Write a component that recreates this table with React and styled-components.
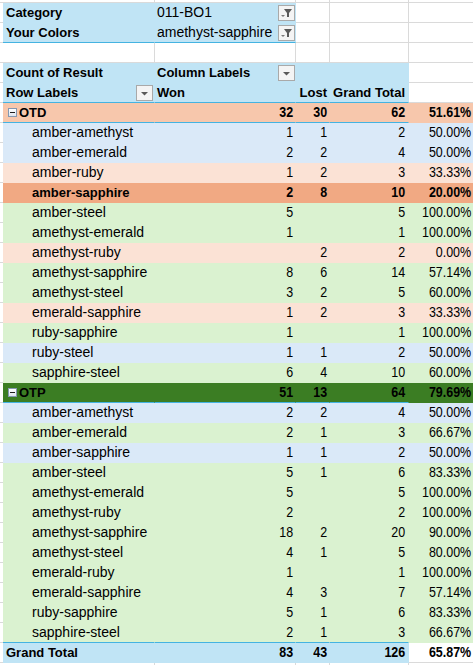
import React from "react";
import styled, { createGlobalStyle } from "styled-components";

const GRID = "#dadada";
const LINE = "#44B3E1";
const TEXT_FONT = `"Liberation Sans", Arial, sans-serif`;

const fills = {
  head: "#C0E4F5",
  blue: "#DAE9F8",
  peach: "#FBE2D5",
  peachMid: "#F7C7AC",
  peachStrong: "#F1A983",
  green: "#DAF2D0",
  greenDark: "#3B7D23",
};

const groups = [
  {
    name: "OTD",
    fill: fills.peachMid,
    items: [
      ["amber-amethyst", 1, 1],
      ["amber-emerald", 2, 2],
      ["amber-ruby", 1, 2],
      ["amber-sapphire", 2, 8, true],
      ["amber-steel", 5, 0],
      ["amethyst-emerald", 1, 0],
      ["amethyst-ruby", 0, 2],
      ["amethyst-sapphire", 8, 6],
      ["amethyst-steel", 3, 2],
      ["emerald-sapphire", 1, 2],
      ["ruby-sapphire", 1, 0],
      ["ruby-steel", 1, 1],
      ["sapphire-steel", 6, 4],
    ],
  },
  {
    name: "OTP",
    fill: fills.greenDark,
    items: [
      ["amber-amethyst", 2, 2],
      ["amber-emerald", 2, 1],
      ["amber-sapphire", 1, 1],
      ["amber-steel", 5, 1],
      ["amethyst-emerald", 5, 0],
      ["amethyst-ruby", 2, 0],
      ["amethyst-sapphire", 18, 2],
      ["amethyst-steel", 4, 1],
      ["emerald-ruby", 1, 0],
      ["emerald-sapphire", 4, 3],
      ["ruby-sapphire", 5, 1],
      ["sapphire-steel", 2, 1],
    ],
  },
];

const GlobalStyle = createGlobalStyle`
  html, body {
    margin: 0;
    background: #fff;
    overflow: hidden;
  }
`;

const Sheet = styled.div`
  display: grid;
  grid-template-columns: 3px 152px 141px 34px 79px 66px;
  grid-template-rows: 3px;
  grid-auto-rows: 20px;
  width: 475px;
  color: #000;
  font-family: ${TEXT_FONT};
`;

const Cell = styled.div`
  box-sizing: border-box;
  display: flex;
  align-items: center;
  justify-content: ${({ $right }) => ($right ? "flex-end" : "flex-start")};
  gap: 2px;
  padding: 0 ${({ $padRight }) => $padRight ?? 2}px 0 ${({ $padLeft }) => $padLeft ?? 2}px;
  background: ${({ $fill }) => $fill || "#fff"};
  border-right: 1px solid ${({ $fill }) => ($fill ? "transparent" : GRID)};
  border-bottom: 1px solid
    ${({ $line, $fill }) => ($line ? LINE : $fill ? "transparent" : GRID)};
  font-size: ${({ $bold }) => ($bold ? 13 : 14)}px;
  font-weight: ${({ $bold }) => ($bold ? 700 : 400)};
  line-height: 19px;
  white-space: nowrap;
  overflow: hidden;
`;

/* numbers in the sheet use a narrow face; squeeze the regular one */
const Num = styled.span`
  display: inline-block;
  font-size: 14.5px;
  transform: scaleX(0.86);
  transform-origin: right center;
`;

const Label = styled.span`
  flex: 1;
  overflow: hidden;
`;

const SmallButton = styled.span`
  box-sizing: border-box;
  flex: none;
  align-self: flex-end;
  width: 17px;
  height: 16px;
  margin-bottom: 1px;
  border: 1px solid #a9a9a9;
  background: #f4f4f4;
  display: flex;
  align-items: center;
  justify-content: center;
`;

const Toggle = styled.span`
  box-sizing: border-box;
  flex: none;
  width: 9px;
  height: 9px;
  margin-left: 5px;
  border: 1px solid #8497b0;
  background: linear-gradient(#ffffff, #dde5ef);
  display: flex;
  align-items: center;
  justify-content: center;

  &::before {
    content: "";
    width: 5px;
    height: 1px;
    background: #1f1f1f;
  }
`;

const FilterButton = () => (
  <SmallButton>
    <svg width="15" height="14" viewBox="0 0 15 14">
      <polygon points="5,3 13,3 10,7 10,11 8,11 8,7" fill="#5a5a5a" />
      <polygon points="2,9 6,9 4,11" fill="#7a7a7a" />
    </svg>
  </SmallButton>
);

const DropButton = () => (
  <SmallButton>
    <svg width="15" height="14" viewBox="0 0 15 14">
      <polygon points="4,6 11,6 7.5,9.5" fill="#5a5a5a" />
    </svg>
  </SmallButton>
);

const Blank = ({ fill }) => <Cell $fill={fill} />;

const pct = (won, total) => `${((won / total) * 100).toFixed(2)}%`;

const rateFill = (won, total) => {
  const r = won / total;
  if (r > 0.5) return fills.green;
  if (r === 0.5) return fills.blue;
  return fills.peach;
};

const DataRow = ({ label, won, lost, fill, bold, toggle, indent, line, pctFill }) => {
  const total = won + lost;
  return (
    <>
      <Blank />
      <Cell $fill={fill} $bold={bold} $line={line} $padLeft={toggle ? 0 : indent ? 29 : 3}>
        {toggle && <Toggle />}
        {label}
      </Cell>
      <Cell $fill={fill} $bold={bold} $line={line} $right>
        <Num>{won || ""}</Num>
      </Cell>
      <Cell $fill={fill} $bold={bold} $line={line} $right>
        <Num>{lost || ""}</Num>
      </Cell>
      <Cell $fill={fill} $bold={bold} $line={line} $right $padRight={3}>
        <Num>{total}</Num>
      </Cell>
      <Cell $fill={pctFill === undefined ? fill : pctFill} $bold={bold} $right $padRight={3}>
        <Num>{pct(won, total)}</Num>
      </Cell>
    </>
  );
};

const EmptyRow = () => (
  <>
    {Array.from({ length: 6 }).map((_, i) => (
      <Blank key={i} />
    ))}
  </>
);

export default function App() {
  const totalWon = groups.reduce((s, g) => s + g.items.reduce((a, it) => a + it[1], 0), 0);
  const totalLost = groups.reduce((s, g) => s + g.items.reduce((a, it) => a + it[2], 0), 0);

  return (
    <>
      <GlobalStyle />
      <Sheet>
        <EmptyRow />

        <Blank />
        <Cell $fill={fills.head} $bold $padLeft={3}>Category</Cell>
        <Cell $fill={fills.head} $padRight={0}>
          <Label>011-BO1</Label>
          <FilterButton />
        </Cell>
        <Blank />
        <Blank />
        <Blank />

        <Blank />
        <Cell $fill={fills.head} $bold $line $padLeft={3}>Your Colors</Cell>
        <Cell $fill={fills.head} $line $padRight={0}>
          <Label>amethyst-sapphire</Label>
          <FilterButton />
        </Cell>
        <Blank />
        <Blank />
        <Blank />

        <EmptyRow />

        <Blank />
        <Cell $fill={fills.head} $bold $padLeft={3}>Count of Result</Cell>
        <Cell $fill={fills.head} $bold $padRight={0}>
          <Label>Column Labels</Label>
          <DropButton />
        </Cell>
        <Blank fill={fills.head} />
        <Blank fill={fills.head} />
        <Blank />

        <Blank />
        <Cell $fill={fills.head} $bold $line $padLeft={3} $padRight={1}>
          <Label>Row Labels</Label>
          <DropButton />
        </Cell>
        <Cell $fill={fills.head} $bold $line>Won</Cell>
        <Cell $fill={fills.head} $bold $line $right>Lost</Cell>
        <Cell $fill={fills.head} $bold $line $right $padRight={3}>Grand Total</Cell>
        <Blank />

        {groups.map((g, gi) => {
          const won = g.items.reduce((a, it) => a + it[1], 0);
          const lost = g.items.reduce((a, it) => a + it[2], 0);
          const lastGroup = gi === groups.length - 1;
          return (
            <React.Fragment key={g.name}>
              <DataRow label={g.name} won={won} lost={lost} fill={g.fill} bold toggle line />
              {g.items.map(([name, w, l, hot], i) => (
                <DataRow
                  key={name}
                  label={name}
                  won={w}
                  lost={l}
                  bold={hot}
                  indent
                  fill={hot ? fills.peachStrong : rateFill(w, w + l)}
                  line={lastGroup && i === g.items.length - 1}
                />
              ))}
            </React.Fragment>
          );
        })}

        <DataRow
          label="Grand Total"
          won={totalWon}
          lost={totalLost}
          fill={fills.head}
          bold
          pctFill={null}
        />

        <EmptyRow />
      </Sheet>
    </>
  );
}
